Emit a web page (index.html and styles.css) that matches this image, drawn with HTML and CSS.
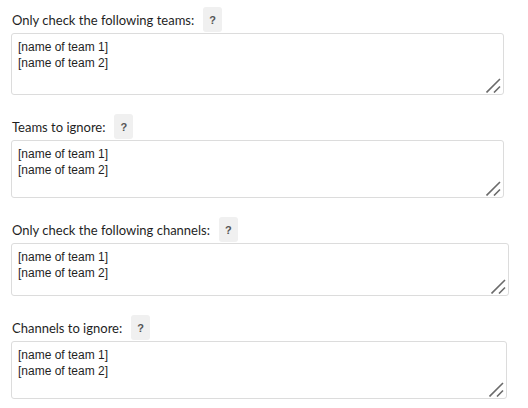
FILE: index.html
```html
<!DOCTYPE html>
<html lang="en">
<head>
  <meta charset="UTF-8">
  <title>Team filter settings</title>
  <link rel="stylesheet" href="styles.css">
</head>
<body>
  <div class="settings">
    <div class="field">
      <div class="field-label">
        <label for="teamsOnly">Only check the following teams:</label>
        <span class="help">?</span>
      </div>
      <div class="box-wrap box-1">
        <textarea id="teamsOnly" class="box">[name of team 1]
[name of team 2]</textarea>
        <svg class="grip" width="15" height="15" viewBox="0 0 15 15"><path d="M0.5 14.5 L14 1 M8 14.5 L14 8.5"/></svg>
      </div>
    </div>

    <div class="field">
      <div class="field-label">
        <label for="teamsIgnore">Teams to ignore:</label>
        <span class="help">?</span>
      </div>
      <div class="box-wrap box-2">
        <textarea id="teamsIgnore" class="box">[name of team 1]
[name of team 2]</textarea>
        <svg class="grip" width="15" height="15" viewBox="0 0 15 15"><path d="M0.5 14.5 L14 1 M8 14.5 L14 8.5"/></svg>
      </div>
    </div>

    <div class="field">
      <div class="field-label">
        <label for="channelsOnly">Only check the following channels:</label>
        <span class="help">?</span>
      </div>
      <div class="box-wrap box-3">
        <textarea id="channelsOnly" class="box">[name of team 1]
[name of team 2]</textarea>
        <svg class="grip" width="15" height="15" viewBox="0 0 15 15"><path d="M0.5 14.5 L14 1 M8 14.5 L14 8.5"/></svg>
      </div>
    </div>

    <div class="field">
      <div class="field-label">
        <label for="channelsIgnore">Channels to ignore:</label>
        <span class="help">?</span>
      </div>
      <div class="box-wrap box-4">
        <textarea id="channelsIgnore" class="box">[name of team 1]
[name of team 2]</textarea>
        <svg class="grip" width="15" height="15" viewBox="0 0 15 15"><path d="M0.5 14.5 L14 1 M8 14.5 L14 8.5"/></svg>
      </div>
    </div>
  </div>
</body>
</html>
```

FILE: styles.css
```css
body {
  margin: 0;
  background: #fff;
  font-family: Lato, "Liberation Sans", sans-serif;
  color: #1f1f1f;
}
.settings {
  padding: 7px 11px;
}
.field {
  margin-bottom: 19px;
}
.field-label {
  display: flex;
  align-items: center;
  height: 26px;
  padding-left: 1px;
  font-size: 13px;
}
.field-label label {
  margin-right: 9px;
}
.help {
  display: flex;
  align-items: center;
  justify-content: center;
  width: 19px;
  height: 25px;
  margin-top: -1px;
  background: #f0f0f0;
  border-radius: 3px;
  color: #555;
  font-family: "Liberation Sans", sans-serif;
  font-size: 11px;
  font-weight: bold;
}
.box-wrap {
  position: relative;
}
.box {
  display: block;
  box-sizing: border-box;
  width: 100%;
  height: 100%;
  margin: 0;
  padding: 5px 6px;
  border: 1px solid #dcdcdc;
  border-radius: 3px;
  font-family: "Liberation Sans", Arial, sans-serif;
  font-size: 12px;
  line-height: 16px;
  color: #1f1f1f;
  outline: none;
  resize: none;
}
.grip {
  position: absolute;
  right: 3px;
  bottom: 2px;
  fill: none;
  stroke: #6b6b6b;
  stroke-width: 1.6;
}
.box-1 {
  width: 493px;
  height: 62px;
}
.box-2 {
  width: 493px;
  height: 58px;
}
.box-3 {
  width: 498px;
  height: 53px;
}
.box-4 {
  width: 496px;
  height: 58px;
}
```
